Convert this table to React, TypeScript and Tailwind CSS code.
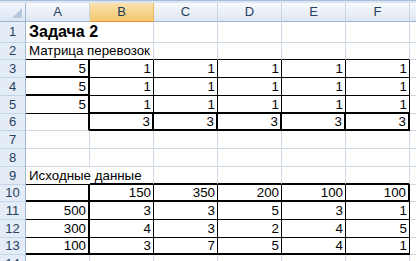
type B = "n" | "g" | "t" | "T";
type Cell = { v?: string; r?: B; b?: B; left?: boolean; bold?: boolean };
type Row = { n: number; h: string; cells: Cell[] };

// cell edges: none, sheet gridline, thin black, medium black
const RIGHT: Record<B, string> = {
  n: "",
  g: "border-r border-r-[#d0d7e5]",
  t: "border-r border-r-black",
  T: "border-r-2 border-r-black",
};
const BOTTOM: Record<B, string> = {
  n: "pb-[3px]",
  g: "border-b border-b-[#d0d7e5] pb-[2px]",
  t: "border-b border-b-black pb-[2px]",
  T: "border-b-2 border-b-black pb-[1px]",
};

const COLS = ["A", "B", "C", "D", "E", "F"];

const plain = (b: B = "g"): Cell[] => COLS.map(() => ({ r: "g", b }));
const nums = (vals: string[], r: B, b: B): Cell[] => vals.map((v) => ({ v, r, b }));

const ROWS: Row[] = [
  {
    n: 1,
    h: "h-[21px]",
    cells: [{ v: "Задача 2", r: "n", b: "g", left: true, bold: true }, ...plain().slice(1)],
  },
  {
    n: 2,
    h: "h-[17px]",
    cells: [{ v: "Матрица перевозок", r: "n", b: "t", left: true }, ...plain("t").slice(1)],
  },
  { n: 3, h: "h-[18px]", cells: [{ v: "5", r: "T", b: "T" }, ...nums(["1", "1", "1", "1", "1"], "t", "t")] },
  { n: 4, h: "h-[18px]", cells: [{ v: "5", r: "T", b: "T" }, ...nums(["1", "1", "1", "1", "1"], "t", "t")] },
  { n: 5, h: "h-[18px]", cells: [{ v: "5", r: "T", b: "t" }, ...nums(["1", "1", "1", "1", "1"], "t", "T")] },
  { n: 6, h: "h-[17px]", cells: [{ r: "T", b: "g" }, ...nums(["3", "3", "3", "3", "3"], "T", "T")] },
  { n: 7, h: "h-[18px]", cells: plain() },
  { n: 8, h: "h-[18px]", cells: plain() },
  {
    n: 9,
    h: "h-[18px]",
    cells: [{ v: "Исходные данные", r: "n", b: "t", left: true }, ...plain("T").slice(1)],
  },
  {
    n: 10,
    h: "h-[17px]",
    cells: [{ r: "T", b: "T" }, ...nums(["150", "350", "200", "100"], "t", "T"), { v: "100", r: "T", b: "T" }],
  },
  { n: 11, h: "h-[18px]", cells: [{ v: "500", r: "T", b: "t" }, ...nums(["3", "3", "5", "3", "1"], "t", "t")] },
  { n: 12, h: "h-[18px]", cells: [{ v: "300", r: "T", b: "t" }, ...nums(["4", "3", "2", "4", "5"], "t", "t")] },
  { n: 13, h: "h-[17px]", cells: [{ v: "100", r: "T", b: "T" }, ...nums(["3", "7", "5", "4", "1"], "t", "T")] },
  { n: 14, h: "h-[18px]", cells: plain() },
];

function Corner() {
  return (
    <div className="relative w-[26px] shrink-0 border-r border-b border-[#9eb6ce] bg-gradient-to-b from-[#f3f7fc] to-[#dbe5f2]">
      <svg className="absolute right-[3px] bottom-[3px]" width="10" height="10" viewBox="0 0 10 10">
        <polygon points="10,0 10,10 0,10" fill="#b6c8df" />
      </svg>
    </div>
  );
}

function ColHeader({ label, active }: { label: string; active?: boolean }) {
  return (
    <div
      className={
        active
          ? "flex w-[64px] shrink-0 items-center justify-center border-r border-b border-r-[#f2b558] border-b-[#f29536] bg-gradient-to-b from-[#fbe1ae] to-[#f4c86b] text-[#1f3b5c]"
          : "flex w-[64px] shrink-0 items-center justify-center border-r border-b border-r-[#c5d5e8] border-b-[#9eb6ce] bg-gradient-to-b from-[#f7f9fc] to-[#dfe7f2] text-[#27415f]"
      }
    >
      {label}
    </div>
  );
}

function SheetCell({ c }: { c: Cell }) {
  const r = RIGHT[c.r ?? "g"];
  const b = BOTTOM[c.b ?? "g"];
  return (
    <div
      className={`relative flex w-[64px] shrink-0 items-end whitespace-nowrap ${r} ${b} ${
        c.left ? "justify-start pl-[3px]" : "justify-end pr-[2px]"
      }`}
    >
      {c.v && (
        <span className={c.bold ? "text-[16px] font-bold leading-[16px]" : "text-[13.33px] leading-[13px]"}>
          {c.v}
        </span>
      )}
    </div>
  );
}

export default function App() {
  return (
    <div className="h-[261px] w-[416px] overflow-hidden bg-white font-['Liberation_Sans',Arial,sans-serif] text-black">
      <div className="h-[3px] border-t border-[#a9bfd9] bg-[#dce6f3]" />

      {/* column letters */}
      <div className="flex h-[19px] text-[13px]">
        <Corner />
        {COLS.map((c) => (
          <ColHeader key={c} label={c} active={c === "B"} />
        ))}
        <div className="flex-1 border-b border-[#9eb6ce] bg-gradient-to-b from-[#f7f9fc] to-[#dfe7f2]" />
      </div>

      {ROWS.map((row) => (
        <div key={row.n} className={`flex ${row.h}`}>
          <div className="flex w-[26px] shrink-0 items-center justify-center border-r border-b border-r-[#9eb6ce] border-b-[#c5d5e8] bg-[#e4ecf7] text-[13px] text-[#27415f]">
            {row.n}
          </div>
          {row.cells.map((c, i) => (
            <SheetCell key={i} c={c} />
          ))}
          <div className="flex-1 border-b border-[#d0d7e5]" />
        </div>
      ))}
    </div>
  );
}
